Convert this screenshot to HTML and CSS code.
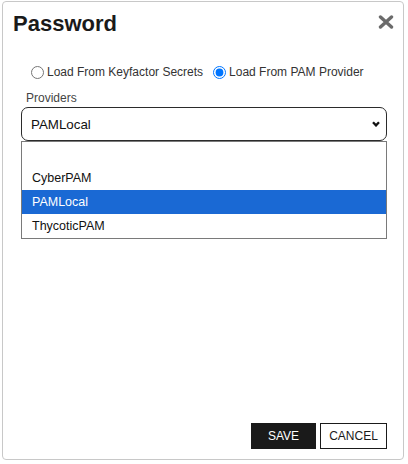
FILE: index.html
```html
<!DOCTYPE html>
<html lang="en">
<head>
    <meta charset="UTF-8">
    <meta name="viewport" content="width=device-width, initial-scale=1.0">
    <title>Password</title>
    <link rel="stylesheet" href="styles.css">
</head>
<body>
    <div class="dialog">
        <div class="dialog-header">
            <h2 class="dialog-title">Password</h2>
            <button class="close-btn" aria-label="Close">
                <svg width="16" height="14" viewBox="0 0 16 14">
                    <path d="M2.5 2 L13.5 12 M13.5 2 L2.5 12" stroke="#6b6b6b" stroke-width="3.4" stroke-linecap="round" fill="none"/>
                </svg>
            </button>
        </div>

        <div class="dialog-body">
            <div class="radio-group">
                <label class="radio-option">
                    <input type="radio" name="source" value="secrets">
                    <span>Load From Keyfactor Secrets</span>
                </label>
                <label class="radio-option">
                    <input type="radio" name="source" value="pam" checked>
                    <span>Load From PAM Provider</span>
                </label>
            </div>

            <div class="field">
                <div class="field-label">Providers</div>
                <div class="select-box">
                    <span>PAMLocal</span>
                    <svg width="8" height="6" viewBox="0 0 8 6">
                        <path d="M1 1.2 L4 4.4 L7 1.2" stroke="#111" stroke-width="2.3" fill="none"/>
                    </svg>
                </div>
                <ul class="select-list">
                    <li class="option"></li>
                    <li class="option">CyberPAM</li>
                    <li class="option selected">PAMLocal</li>
                    <li class="option">ThycoticPAM</li>
                </ul>
            </div>
        </div>

        <div class="dialog-footer">
            <button class="btn btn-save">SAVE</button>
            <button class="btn btn-cancel">CANCEL</button>
        </div>
    </div>
</body>
</html>
```

FILE: styles.css
```css
body { margin: 0; font-family: "Liberation Sans", Arial, sans-serif; background: #fff; }
.dialog { display: flex; flex-direction: column; box-sizing: border-box; width: 402px; height: 459px; margin: 1px 0 0 2px; border: 1px solid #c8c8c8; border-radius: 4px; background: #fff; }
.dialog-header { display: flex; justify-content: space-between; align-items: flex-start; padding: 11px 9px 0 10px; }
.dialog-title { margin: 0; font-size: 22px; line-height: 22px; font-weight: bold; color: #1a1a1a; }
.close-btn { display: flex; padding: 0; margin-top: 2px; border: none; background: none; cursor: pointer; }
.dialog-body { padding: 29px 16px 0 18px; }
.radio-group { display: flex; align-items: center; gap: 5px; margin-left: 5px; height: 16px; }
.radio-option { display: inline-flex; align-items: center; font-size: 12px; color: #333; }
.radio-option input { width: 13px; height: 13px; margin: 0 3px 0 5px; }
.field { margin-top: 11px; }
.field-label { margin-left: 5px; font-size: 12px; line-height: 14px; color: #444; }
.select-box { display: flex; justify-content: space-between; align-items: center; box-sizing: border-box; height: 34px; margin-top: 2px; padding: 0 6px 0 9px; border: 1px solid #2b2b2b; border-radius: 7px; font-size: 13.33px; color: #111; }
.select-list { list-style: none; margin: 0; padding: 0; border: 1px solid #7a7a7a; }
.option { height: 24px; line-height: 24px; padding-left: 10px; font-size: 12.5px; color: #111; }
.option.selected { background: #1a69d4; color: #fff; }
.dialog-footer { display: flex; justify-content: flex-end; gap: 4px; margin-top: auto; padding: 0 16px 10px; }
.btn { box-sizing: border-box; height: 26px; padding: 0; border: 1px solid #1a1a1a; font-family: "Liberation Sans", Arial, sans-serif; font-size: 12px; cursor: pointer; }
.btn-save { width: 65px; background: #1a1a1a; color: #fff; }
.btn-cancel { width: 67px; background: #fff; color: #1a1a1a; }
```
